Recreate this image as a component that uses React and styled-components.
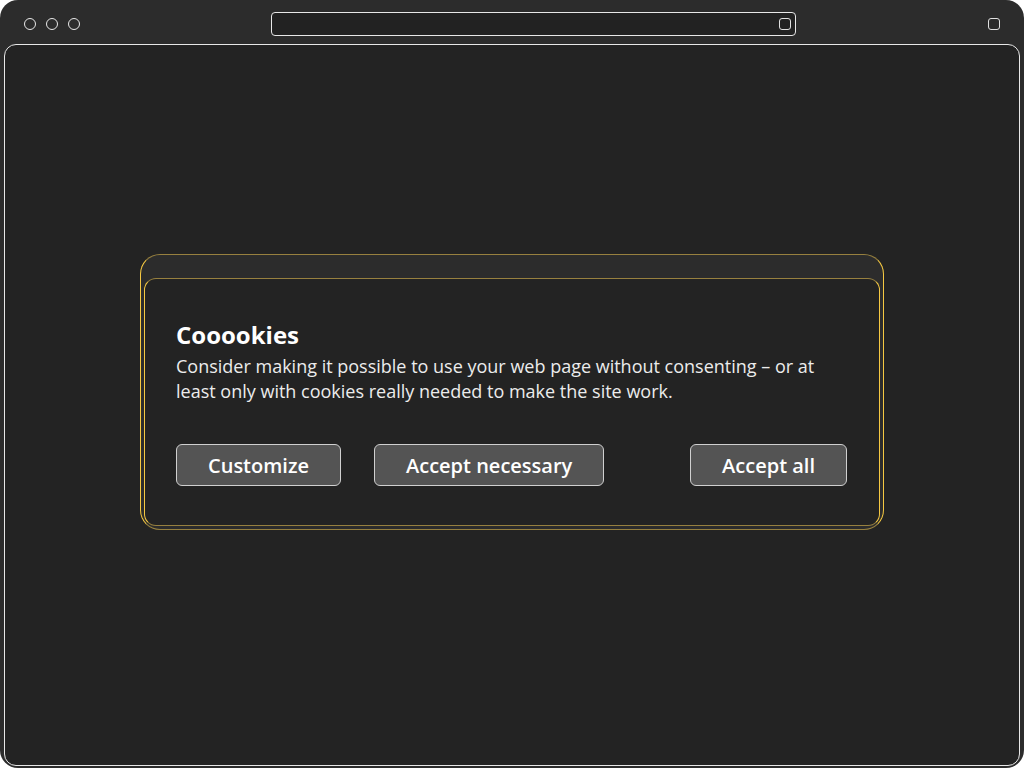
import React from 'react';
import styled, { createGlobalStyle } from 'styled-components';

const GlobalStyle = createGlobalStyle`
  html, body {
    margin: 0;
    padding: 0;
    background: #ffffff;
  }
  body {
    font-family: 'Open Sans', 'Noto Sans', sans-serif;
  }
`;

const App = () => {
  return (
    <>
      <GlobalStyle />
      <SWindow>
        <STitleBar>
          <SDots>
            <SDot />
            <SDot />
            <SDot />
          </SDots>
          <SAddressBar>
            <SSquare />
          </SAddressBar>
          <SSquare $right />
        </STitleBar>
        <SViewport>
          <SBanner>
            <SCard>
              <STitle>Cooookies</STitle>
              <SText>
                Consider making it possible to use your web page without consenting – or at
                least only with cookies really needed to make the site work.
              </SText>
              <SActions>
                <SButton>Customize</SButton>
                <SButton>Accept necessary</SButton>
                <SButton $push>Accept all</SButton>
              </SActions>
            </SCard>
          </SBanner>
        </SViewport>
      </SWindow>
    </>
  );
};

export default App;

const SWindow = styled.div`
  width: 1024px;
  height: 768px;
  box-sizing: border-box;
  background: #2c2c2c;
  border-radius: 18px;
  padding: 0 4px 2px 4px;
  display: flex;
  flex-direction: column;
  overflow: hidden;
`;

const STitleBar = styled.div`
  height: 44px;
  box-sizing: border-box;
  flex-shrink: 0;
  display: flex;
  align-items: center;
  padding: 4px 20px 0 20px;
`;

const SDots = styled.div`
  display: flex;
  column-gap: 10px;
`;

const SDot = styled.span`
  display: block;
  box-sizing: border-box;
  width: 12px;
  height: 12px;
  border: 1.5px solid #e8e8e8;
  border-radius: 50%;
`;

const SAddressBar = styled.div`
  margin-left: 191px;
  width: 525px;
  height: 24px;
  box-sizing: border-box;
  border: 1px solid #e8e8e8;
  border-radius: 4px;
  background: #222222;
  display: flex;
  align-items: center;
  justify-content: flex-end;
  padding-right: 4px;
`;

const SSquare = styled.span`
  display: block;
  box-sizing: border-box;
  width: 12px;
  height: 12px;
  border: 1.5px solid #e0e0e0;
  border-radius: 3px;
  margin-left: ${(p) => (p.$right ? 'auto' : '0')};
`;

const SViewport = styled.div`
  flex: 1;
  box-sizing: border-box;
  background: #232323;
  border: 1px solid #e8e8e8;
  border-radius: 12px;
  display: flex;
  justify-content: center;
  align-items: flex-start;
  padding-top: 209px;
`;

const SBanner = styled.div`
  width: 744px;
  box-sizing: border-box;
  padding: 23px 3px 3px 3px;
  background: #2c2c2c;
  border: 1px solid;
  border-color: #97803f #f5c842;
  border-radius: 20px;
`;

const SCard = styled.div`
  box-sizing: border-box;
  background: #232323;
  border: 1px solid;
  border-color: #97803f #f5c842;
  border-radius: 12px;
  padding: 40px 32px 39px 31px;
  color: #f2f2f2;
`;

const STitle = styled.h2`
  margin: 0;
  font-size: 24px;
  line-height: 32px;
  font-weight: 700;
  color: #ffffff;
`;

const SText = styled.p`
  margin: 3px 0 0;
  font-size: 18px;
  line-height: 25px;
  color: #ececec;
`;

const SActions = styled.div`
  display: flex;
  align-items: center;
  column-gap: 33px;
  margin-top: 40px;
`;

const SButton = styled.button`
  height: 42px;
  box-sizing: border-box;
  padding: 0 31px;
  background: #545454;
  border: 1px solid #d0d0d0;
  border-radius: 6px;
  color: #ffffff;
  font-family: 'Open Sans', 'Noto Sans', sans-serif;
  font-size: 20px;
  font-weight: 600;
  margin-left: ${(p) => (p.$push ? 'auto' : '0')};
  cursor: pointer;
`;
